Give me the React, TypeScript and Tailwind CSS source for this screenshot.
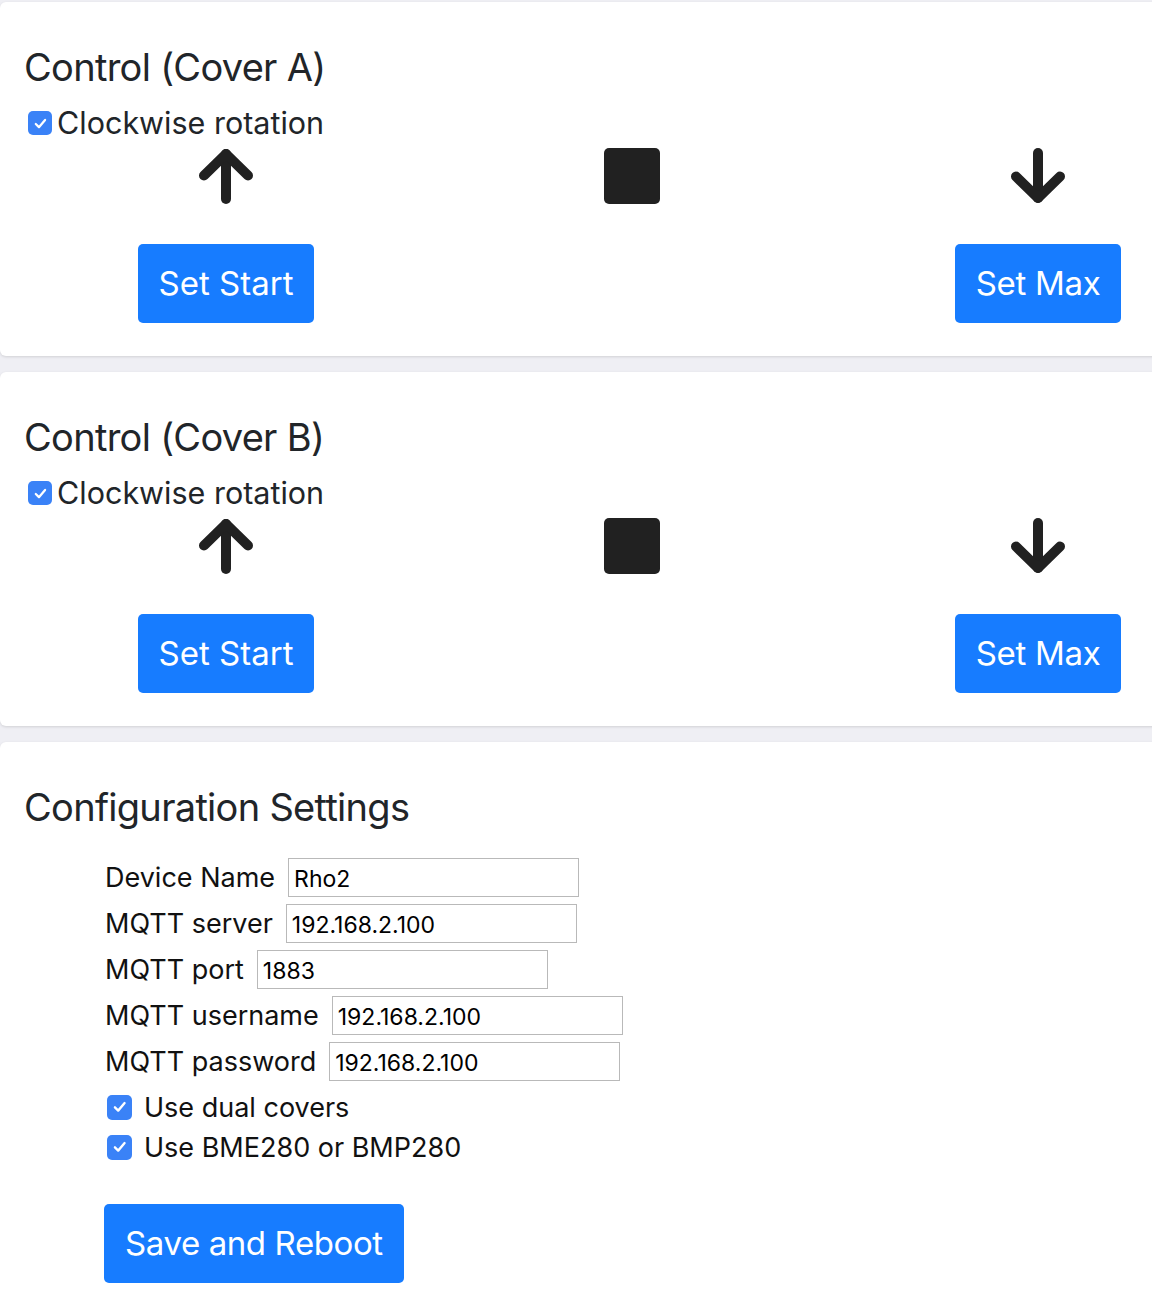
import React from "react";

const font = { fontFamily: "Inter, 'Noto Sans', sans-serif" };

function Check({ size }: { size: number }) {
  return (
    <span
      className="inline-flex items-center justify-center rounded-[5px] bg-[#3a82f7] shrink-0"
      style={{ width: size, height: size }}
    >
      <svg width={size * 0.62} height={size * 0.62} viewBox="0 0 16 16" fill="none">
        <path d="M3 8.6 6.4 12 13 4.2" stroke="white" strokeWidth="2.4" strokeLinecap="round" strokeLinejoin="round" />
      </svg>
    </span>
  );
}

function ArrowUp() {
  return (
    <svg width="56" height="56" viewBox="0 0 56 56" fill="none">
      <path d="M28 51V6" stroke="#212121" strokeWidth="10" strokeLinecap="round" />
      <path d="M6 27.5 28 6l22 21.5" stroke="#212121" strokeWidth="10" strokeLinecap="round" strokeLinejoin="round" />
    </svg>
  );
}

function ArrowDown() {
  return (
    <svg width="56" height="56" viewBox="0 0 56 56" fill="none">
      <path d="M28 5v45" stroke="#212121" strokeWidth="10" strokeLinecap="round" />
      <path d="M6 28.5 28 50l22-21.5" stroke="#212121" strokeWidth="10" strokeLinecap="round" strokeLinejoin="round" />
    </svg>
  );
}

function ControlCard({ name }: { name: string }) {
  return (
    <div className="w-[1264px] h-[354px] bg-white rounded-md shadow-[0_1px_3px_rgba(0,0,0,0.13)] pt-[40px] px-[23px]">
      <h3 className="text-[38px] leading-[50px] tracking-[-0.7px] font-normal text-[#212529] pl-[1px]">Control ({name})</h3>
      <label className="mt-[13px] flex items-center gap-[5px] h-[36px] pl-[5px]">
        <Check size={24} />
        <span className="text-[30.5px] leading-[36px] text-[#212529]">Clockwise rotation</span>
      </label>
      <div className="grid grid-cols-[406px_406px_406px] mt-[7px]">
        <div className="flex flex-col items-center">
          <ArrowUp />
          <button className="mt-[40px] h-[79px] px-[21px] rounded-[5px] bg-[#177cff] text-white text-[33px] leading-none">Set Start</button>
        </div>
        <div className="flex flex-col items-center">
          <div className="w-[56px] h-[56px] rounded-[5px] bg-[#212121]" />
        </div>
        <div className="flex flex-col items-center">
          <ArrowDown />
          <button className="mt-[40px] h-[79px] px-[21px] rounded-[5px] bg-[#177cff] text-white text-[33px] tracking-[-0.3px] leading-none">Set Max</button>
        </div>
      </div>
    </div>
  );
}

function Field({ label, value }: { label: string; value: string }) {
  return (
    <div className="flex items-center gap-[13px] h-[46px]">
      <span className="text-[27px] leading-[33px] text-[#111]">{label}</span>
      <input
        readOnly
        value={value}
        className="w-[291px] h-[39px] border border-[#b9b9b9] px-[5px] pt-[3px] text-[23px] text-black outline-none bg-white"
        style={font}
      />
    </div>
  );
}

function CheckRow({ label }: { label: string }) {
  return (
    <div className="flex items-center h-[40px] pl-[2px] gap-[12px]">
      <Check size={25} />
      <span className="text-[27px] leading-[33px] text-[#111]">{label}</span>
    </div>
  );
}

export default function App() {
  return (
    <div className="w-full min-h-[1300px] bg-[#efeff4] overflow-hidden pt-[2px]" style={font}>
      <div className="flex flex-col gap-[16px]">
        <ControlCard name="Cover A" />
        <ControlCard name="Cover B" />
        <div className="w-[1264px] h-[600px] bg-white rounded-md shadow-[0_1px_3px_rgba(0,0,0,0.13)] pt-[40px] px-[23px]">
          <h3 className="text-[38px] leading-[50px] tracking-[-0.7px] font-normal text-[#212529] pl-[1px]">Configuration Settings</h3>
          <div className="ml-[82px] mt-[22px]">
            <Field label="Device Name" value="Rho2" />
            <Field label="MQTT server" value="192.168.2.100" />
            <Field label="MQTT port" value="1883" />
            <Field label="MQTT username" value="192.168.2.100" />
            <Field label="MQTT password" value="192.168.2.100" />
            <div className="mt-[3px]">
              <CheckRow label="Use dual covers" />
              <CheckRow label="Use BME280 or BMP280" />
            </div>
            <button className="mt-[37px] h-[79px] px-[21px] rounded-[5px] bg-[#177cff] text-white text-[33px] tracking-[-0.4px] leading-none -ml-[1px]">Save and Reboot</button>
          </div>
        </div>
      </div>
    </div>
  );
}
